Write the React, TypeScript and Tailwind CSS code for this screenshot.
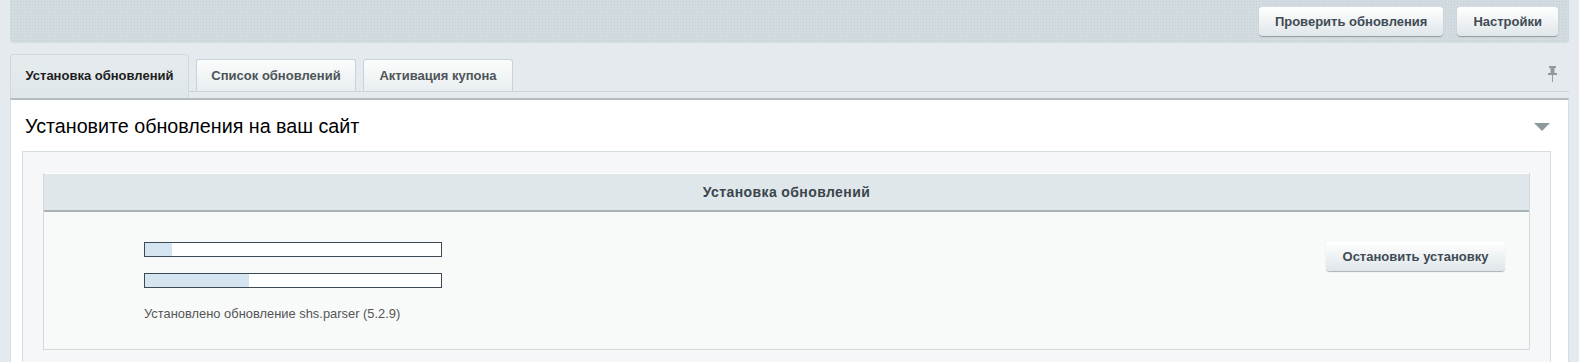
const btn =
  "h-[29px] rounded-[4px] bg-gradient-to-b from-white to-[#dfe6e9] px-[16px] text-[13px] font-bold text-[#3f4b54] shadow-[0_1px_1px_rgba(0,0,0,0.3),inset_0_1px_0_#fff]";

const Pin = () => (
  <svg width="9" height="16" viewBox="0 0 9 16" className="text-[#8f999e]">
    <rect x="1" y="0" width="7" height="2" fill="currentColor" />
    <rect x="2.5" y="2" width="4" height="5" fill="currentColor" />
    <rect x="0" y="7" width="9" height="2" fill="currentColor" />
    <rect x="4" y="9" width="1" height="7" fill="currentColor" />
  </svg>
);

const Progress = ({ value }: { value: number }) => (
  <div className="h-[15px] w-[298px] border border-[#3d4a54] bg-white">
    <div className="h-full bg-[#d4e4f1]" style={{ width: `${value}%` }} />
  </div>
);

const App = () => {
  return (
    <div className="h-[362px] w-full overflow-hidden bg-[#e4eaed] font-['Liberation_Sans',Arial,sans-serif]">
      {/* top bar */}
      <div className="mx-[10px] flex h-[43px] items-start justify-end gap-[14px] rounded-b-[4px] bg-[#d2dbdf] bg-[radial-gradient(#c6cfd3_1px,transparent_1px)] bg-[length:3px_3px] pr-[11px] pt-[7px]">
        <button className={btn}>Проверить обновления</button>
        <button className={btn}>Настройки</button>
      </div>

      {/* tabs */}
      <div className="mx-[10px] mt-[11px] flex h-[44px]">
        <div className="flex h-[44px] w-[179px] items-start justify-center rounded-t-[4px] border border-b-0 border-[#cfd8dc] bg-gradient-to-b from-[#e6ecee] to-[#dfe6e9] pt-[11px] text-[13px] font-bold text-[#1e1e1e]">
          Установка обновлений
        </div>
        <div className="flex flex-1 flex-col">
          <div className="flex h-[38px] items-end gap-[7px] border-b border-[#cbd4d8] pl-[7px]">
            <div className="flex h-[32px] w-[160px] items-center justify-center rounded-t-[3px] border border-b-0 border-[#c9d2d6] bg-gradient-to-b from-[#fbfcfc] to-[#e9eef0] text-[13px] font-bold text-[#4e5458]">
              Список обновлений
            </div>
            <div className="flex h-[32px] w-[150px] items-center justify-center rounded-t-[3px] border border-b-0 border-[#c9d2d6] bg-gradient-to-b from-[#fbfcfc] to-[#e9eef0] text-[13px] font-bold text-[#4e5458]">
              Активация купона
            </div>
            <div className="ml-auto mr-[12px] self-start pt-[12px]">
              <Pin />
            </div>
          </div>
        </div>
      </div>

      {/* panel */}
      <div className="mx-[10px] h-[264px] border-x border-t-2 border-x-[#d6dde0] border-t-[#b3bcc0] bg-white">
        <div className="flex h-[51px] items-center justify-between pl-[14px] pr-[18px] pt-[2px]">
          <h1 className="text-[19.7px] text-black">Установите обновления на ваш сайт</h1>
          <svg width="16" height="8" viewBox="0 0 16 8">
            <polygon points="0,0 16,0 8,8" fill="#8e989d" />
          </svg>
        </div>

        <div className="ml-[11px] mr-[17px] h-[213px] border border-b-0 border-[#d6dde0] bg-[#f5f7f8] px-[20px] pt-[21px]">
          <div className="border-x border-b border-[#d3dadd] bg-[#f8fafa]">
            <div className="flex h-[39px] items-center justify-center border-b-2 border-t border-b-[#a9b2b6] border-t-white bg-[#e0e7ea] text-[14px] font-bold tracking-[0.4px] text-[#3a454d]">
              Установка обновлений
            </div>
            <div className="flex h-[137px] items-start justify-between pl-[100px] pr-[24px] pt-[30px]">
              <div className="flex flex-col gap-[16px]">
                <Progress value={9} />
                <Progress value={35} />
                <div className="text-[12.9px] text-[#555]">
                  Установлено обновление shs.parser (5.2.9)
                </div>
              </div>
              <button className={btn + " w-[179px] px-0"}>Остановить установку</button>
            </div>
          </div>
        </div>
      </div>
    </div>
  );
};

export default App;
